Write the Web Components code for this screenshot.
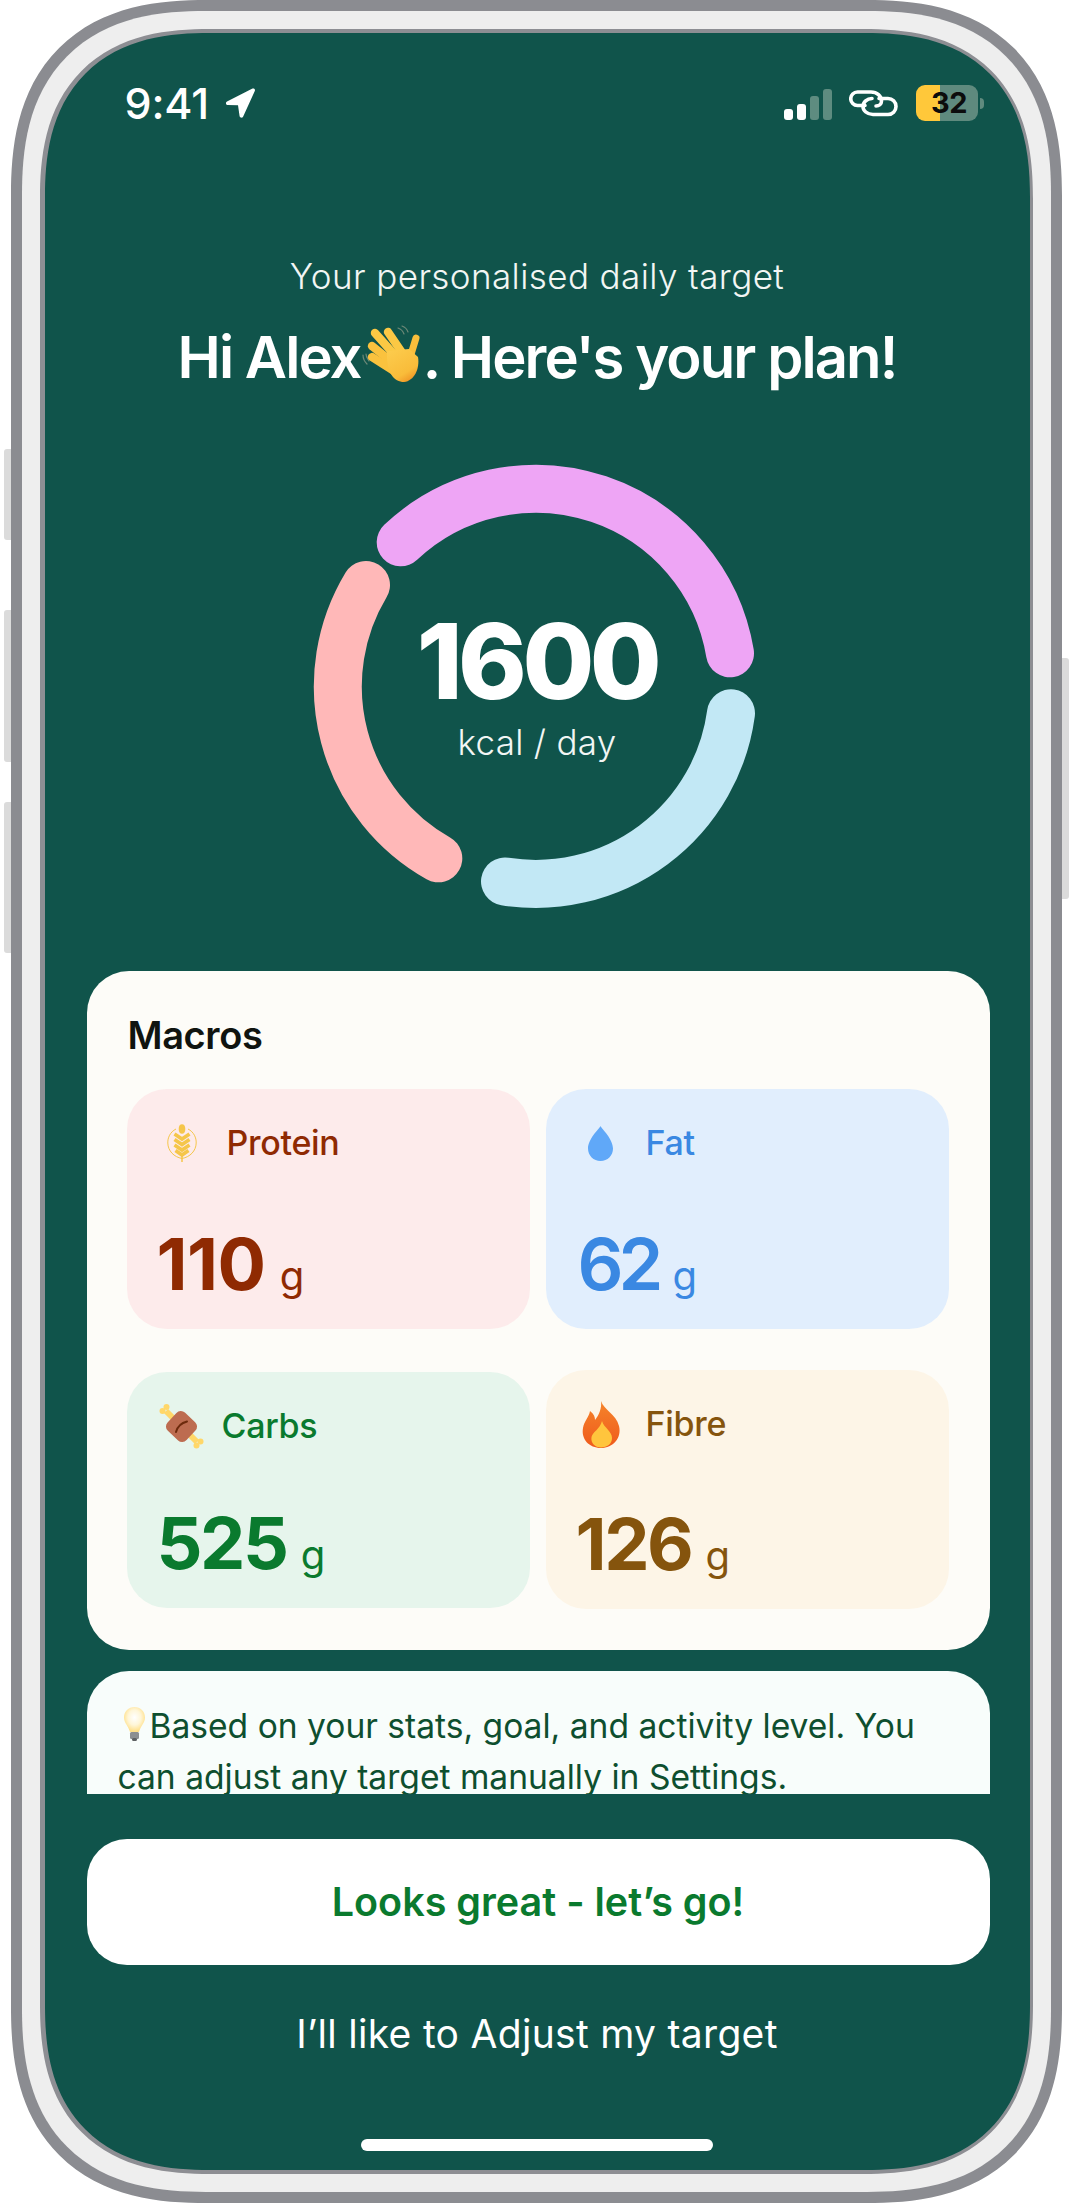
<!DOCTYPE html>
<html lang="en"><head><meta charset="utf-8"><title>Daily target</title>
<style>
html,body{margin:0;padding:0;background:#fff}
body{font-family:Inter,"Liberation Sans",sans-serif}
</style></head>
<body>
<device-frame>
  <status-bar></status-bar>
  <plan-heading>
    <span slot="sub">Your personalised daily target</span>
    <span slot="title">Hi Alex<svg width="60" height="58" viewBox="0 0 60 58" role="img" aria-label="waving hand" style="vertical-align:-5px;margin:0 1px 0 1px">
      <defs><linearGradient id="hg" x1="0.2" y1="0" x2="0.8" y2="1"><stop offset="0" stop-color="#FCCB4C"/><stop offset=".7" stop-color="#F9BC3A"/><stop offset="1" stop-color="#EE8F22"/></linearGradient></defs>
      <g fill="none" stroke="#8C9A86" stroke-width="1.2" stroke-linecap="round" opacity=".75"><path d="M36 3c3 1 5 3 6 6M40 1c3 1 5 3 6 6M1 30c0 4 2 7 4 9M4 29c0 3 2 5 3 7"/></g>
      <g stroke-linecap="round" fill="none" stroke-width="8.4">
        <path d="M13 8 38 36" stroke="#FBC844"/><path d="M26 7 43 32" stroke="#FBC844"/><path d="M10 21 35 41" stroke="#FAC23E"/><path d="M10 32 32 46" stroke="#FAC23E"/><path d="M54 13 47 36" stroke="#F9BE3B" stroke-width="7"/>
      </g>
      <path d="M25 26 47 24 56 32C58 44 52 56 42 57 32 57 24 48 25 26Z" fill="url(#hg)"/>
    </svg>. Here's your plan!</span>
  </plan-heading>
  <ring-chart value="1600" unit="kcal / day"></ring-chart>
  <macro-card heading="Macros">
    <macro-tile label="Protein" amount="110" tone="protein" track="-.5px">
      <svg slot="icon" width="30" height="38" viewBox="0 0 30 38" role="img" aria-label="wheat">
        <g fill="none" stroke="#F5C64A">
          <path d="M9 5C3 8 .6 14 .8 19 1 27 7 33 15 34.500 23 33 29 27 29.200 19 29.400 14 27 8 21 5" stroke-width="1"/>
          <path d="M7.500 10 15 15 22.500 10M7.500 15.500 15 20.500 22.500 15.500M7.500 21 15 26 22.500 21M8.500 26.500 15 31 21.500 26.500" stroke-width="3.600"/>
          <path d="M15 30V38" stroke-width="1.500"/>
        </g>
        <ellipse cx="15" cy="5" rx="3.300" ry="4.800" fill="#F5C64A"/>
      </svg>
    </macro-tile>
    <macro-tile label="Fat" amount="62" tone="fat" light track="-5px">
      <svg slot="icon" width="25" height="35" viewBox="0 0 25 35" role="img" aria-label="droplet"><path d="M12.500 0C14 3 25 13 25 22.500 25 29.500 19.500 35 12.500 35S0 29.500 0 22.500C0 13 11 3 12.500 0Z" fill="#60A8F8"/></svg>
    </macro-tile>
    <macro-tile label="Carbs" amount="525" tone="carbs" short>
      <svg slot="icon" width="45" height="45" viewBox="0 0 45 45" role="img" aria-label="meat on bone">
        <path d="M7 7 38 38" stroke="#FFD769" stroke-width="6"/>
        <g fill="#FFD769"><circle cx="3.500" cy="7" r="3"/><circle cx="7.500" cy="3" r="3"/><circle cx="37.500" cy="41.500" r="3"/><circle cx="41.500" cy="37.500" r="3"/></g>
        <rect x="9.500" y="10" width="26" height="25" rx="6" transform="rotate(43 22.500 22.500)" fill="#BD6C50"/>
        <path d="M17 28C18.500 22.500 22 19 28 17.500" fill="none" stroke="#6D2A0C" stroke-width="2" stroke-linecap="round"/>
      </svg>
    </macro-tile>
    <macro-tile label="Fibre" amount="126" tone="fibre" short lift>
      <svg slot="icon" width="42" height="49" viewBox="0 0 42 49" role="img" aria-label="fire">
        <defs><linearGradient id="fg" x1="0" y1="0" x2="0" y2="1"><stop offset="0" stop-color="#F5842A"/><stop offset="1" stop-color="#EF5A1C"/></linearGradient></defs>
        <path d="M21 1C24 10 36 14 39 26 42 38 33 48 21 48 9 48 1 39 3 28 4 21 9 17 10 11 14 14 15 17 15 20 19 15 22 8 21 1Z" fill="url(#fg)"/>
        <path d="M22 21C24 28 32 31 32 38 32 44 27 47.500 21 47.500 15 47.500 10.500 43 11.500 37 12.500 32 20 29 22 21Z" fill="#FFC53D"/>
      </svg>
    </macro-tile>
  </macro-card>
  <tip-card><svg width="21" height="34" viewBox="0 0 21 34" role="img" aria-label="light bulb" style="vertical-align:-3px;margin:0 5px 0 6px">
      <defs><radialGradient id="bg" cx=".5" cy=".42" r=".55"><stop offset="0" stop-color="#fff"/><stop offset=".55" stop-color="#FFF6D8"/><stop offset="1" stop-color="#FFE08A"/></radialGradient></defs>
      <path d="M10.500 0C16.500 0 21 4.500 21 10.500 21 16 16.500 19 15 25H6C4.500 19 0 16 0 10.500 0 4.500 4.500 0 10.500 0Z" fill="url(#bg)"/>
      <rect x="6" y="25" width="9" height="7" rx="1.500" fill="#8C8F91"/><rect x="8" y="31" width="5" height="3" rx="1.500" fill="#5E6163"/>
    </svg>Based on your stats, goal, and activity level. You can adjust any target manually in Settings.</tip-card>
  <action-button>Looks great - let’s go!</action-button>
  <text-action>I’ll like to Adjust my target</text-action>
  <home-bar></home-bar>
</device-frame>
<script>
function def(name, css, html, init){
  customElements.define(name, class extends HTMLElement{
    constructor(){super();const r=this.attachShadow({mode:'open'});r.innerHTML='<style>'+css+'</style>'+(typeof html==='function'?html(this):html);}
    connectedCallback(){if(init)init(this,this.shadowRoot);}
  });
}
def('device-frame',`
  :host{display:grid;grid-template-columns:7px 1051px 7px;width:1065px;margin-left:4px;font-family:Inter,"Liberation Sans",sans-serif}
  .side{display:flex;flex-direction:column}
  .side i{display:block;background:#DBDBDB}
  .l i{border-radius:3px 0 0 3px}.r i{border-radius:0 3px 3px 0}
  .shell{height:2203px;box-sizing:border-box;background:#8B8C91;border-radius:160px;padding:11px}
  .band{height:100%;box-sizing:border-box;background:#EEEEEE;border-radius:149px;padding:18px}
  .inner{height:100%;box-sizing:border-box;background:#8D8E93;border-radius:131px;padding:4px 3.5px 4px 4.5px}
  .screen{height:100%;box-sizing:border-box;background:#10544B;border-radius:127px;overflow:hidden;display:flex;flex-direction:column}
  @supports (corner-shape: superellipse(1.3)){
    .shell{border-radius:196px;corner-shape:superellipse(1.3)}
    .band{border-radius:184px;corner-shape:superellipse(1.3)}
    .inner{border-radius:170px;corner-shape:superellipse(1.3)}
    .screen{border-radius:165px;corner-shape:superellipse(1.3)}
  }
`,`<div class="side l"><i style="margin-top:449px;height:91px"></i><i style="margin-top:70px;height:152px"></i><i style="margin-top:40px;height:151px"></i></div>
<div class="shell"><div class="band"><div class="inner"><div class="screen"><slot></slot></div></div></div></div>
<div class="side r"><i style="margin-top:658px;height:241px"></i></div>`);

def('status-bar',`
  :host{display:flex;align-items:center;height:40px;padding:50px 46px 0 80px;color:#fff}
  .t{font:500 43px/40px Inter,"Liberation Sans",sans-serif;letter-spacing:-.2px}
  .arrow{margin-left:16px}
  .sp{flex:1}
  .bars{display:flex;align-items:flex-end;gap:4px;height:31px;margin-top:3px}
  .bars i{display:block;width:9px;border-radius:3px;background:#fff}
  .bars i.d{background:#5E8C80}
  .link{margin-left:17px}
  .bat{margin-left:18px;display:flex;align-items:center}
  .cell{position:relative;width:62px;height:36px;border-radius:9px;overflow:hidden;background:linear-gradient(90deg,#FFC83A 0 24px,#5F8A7E 24px);display:flex;align-items:center;justify-content:center;color:#0c0c0c;font:700 29px/36px Inter,"Liberation Sans",sans-serif;letter-spacing:-.5px;padding-left:5px;box-sizing:border-box}
  .cap{width:4px;height:11px;margin-left:2px;background:#5F8A7E;border-radius:0 4px 4px 0}
`,`<span class="t">9:41</span>
<svg class="arrow" width="30" height="30" viewBox="0 0 30 30"><path d="M27.500 .6 2 13.500C.2 14.500.8 17 2.800 17L13 17.300 14.600 28.300C15 30 17.500 30.200 18.200 28.500L29.800 3C30.500 1.200 29 0 27.500 .6Z" fill="#fff"/></svg>
<span class="sp"></span>
<span class="bars"><i style="height:11px"></i><i style="height:16px"></i><i class="d" style="height:24px"></i><i class="d" style="height:31px"></i></span>
<svg class="link" width="49" height="27" viewBox="0 0 49 27" fill="none" stroke="#fff" stroke-width="3.600" stroke-linecap="round"><path d="M16 15.500H8.500A6.700 6.700 0 0 1 8.500 2H22C28 2 32.500 6 32.500 11 32.500 14 30 16 27 16"/><path d="M30 8.500H39A8 8 0 0 1 39 24.500H24C18 24.500 14 20.500 14 16.500 14 12 18 8.500 23 8.500"/></svg>
<span class="bat"><span class="cell">32</span><span class="cap"></span></span>`);

def('plan-heading',`
  :host{display:block;text-align:center;color:#fff}
  .s{margin-top:131px;font:300 35px/44px Inter,"Liberation Sans",sans-serif;color:#F2F6F4;letter-spacing:.4px}
  h1{margin:23px 0 0;font:600 58px/72px Inter,"Liberation Sans",sans-serif;letter-spacing:-1.9px;white-space:nowrap}
`,`<div class="s"><slot name="sub"></slot></div><h1><slot name="title"></slot></h1>`);

def('ring-chart',`
  :host{display:grid;justify-items:center;margin-top:69px;height:450px;color:#fff;text-align:center}
  svg,.c{grid-area:1/1}
  .c{align-self:start;padding-top:147px}
  .v{font:800 104px/104px Inter,"Liberation Sans",sans-serif;letter-spacing:-4.5px}
  .u{margin-top:7px;font:300 35px/44px Inter,"Liberation Sans",sans-serif;color:#F2F6F4;letter-spacing:.3px}
`,h=>`<svg width="450" height="450" viewBox="0 0 450 450" fill="none" stroke-width="48" stroke-linecap="round">
  <path d="M88.700 80.300A197 197 0 0 1 418 191.300" stroke="#EEA5F5"/>
  <path d="M419 251.300A197 197 0 0 1 193 419.500" stroke="#C2E8F5"/>
  <path d="M126.300 396.300A197 197 0 0 1 54 123" stroke="#FFB8B8"/>
</svg>
<div class="c"><div class="v">${h.getAttribute('value')}</div><div class="u">${h.getAttribute('unit')}</div></div>`);

def('macro-card',`
  :host{display:block;margin:59px 40px 0 42px;height:679px;box-sizing:border-box;background:#FDFCF8;border-radius:42px;padding:42px 40px 0 40px}
  h2{margin:0 0 32px;font:600 38px/44px Inter,"Liberation Sans",sans-serif;letter-spacing:-.4px;color:#101410;padding-left:1px}
  .g{display:grid;grid-template-columns:403px 403px;grid-template-rows:240px 236px;column-gap:16px;row-gap:43px}
`,h=>`<h2>${h.getAttribute('heading')}</h2><div class="g"><slot></slot></div>`);

const tones={protein:['#FDEBEB','#8F2A02'],fat:['#E1EEFD','#3A88E2'],carbs:['#E6F5EC','#0A7A2E'],fibre:['#FDF5E7','#85540D']};
def('macro-tile',`
  :host{display:flex;flex-direction:column;box-sizing:border-box;border-radius:40px;padding:34px 0 29px 30px;background:var(--bg);color:var(--fg)}
  :host([lift]){margin:-2px 0 -1px}
  .h{display:flex;align-items:center;height:40px}
  .i{width:50px;display:flex;justify-content:center;align-items:center;flex:none;height:40px}
  .l{margin-left:var(--gap,20px);font:500 34px/40px Inter,"Liberation Sans",sans-serif;letter-spacing:-.3px}
  .a{margin-top:auto;display:flex;align-items:baseline;white-space:nowrap;height:72px}
  .n{font:700 72px/72px Inter,"Liberation Sans",sans-serif;letter-spacing:var(--track,-2.4px)}
  :host([light]) .n{font-weight:600;margin-left:2px}
  .g{margin-left:14px;font:400 40px/40px Inter,"Liberation Sans",sans-serif}
`,h=>{const t=tones[h.getAttribute('tone')];const tr=h.getAttribute('track');
  return `<style>:host{--bg:${t[0]};--fg:${t[1]};${h.getAttribute('label')==='Carbs'?'--gap:15px;':''}${tr?'--track:'+tr+';':''}}</style>
  <div class="h"><span class="i"><slot name="icon"></slot></span><span class="l">${h.getAttribute('label')}</span></div>
  <div class="a"><span class="n">${h.getAttribute('amount')}</span><span class="g">g</span></div>`});

def('tip-card',`
  :host{display:block;margin:21px 40px 0 42px;height:123px;overflow:hidden;box-sizing:border-box;background:#F8FDFB;border-radius:42px 42px 0 0;padding:29px 31px 0 31px;font:400 33.6px/51px Inter,"Liberation Sans",sans-serif;color:#0E4F2F}
`,`<slot></slot>`);

def('action-button',`
  :host{display:flex;align-items:center;justify-content:center;margin:45px 40px 0 42px;height:126px;background:#fff;border-radius:40px;color:#0A7A2E;font:600 39.5px/48px Inter,"Liberation Sans",sans-serif}
`,`<slot></slot>`);
def('text-action',`
  :host{display:block;margin-top:45px;text-align:center;color:#fff;font:400 39px/48px Inter,"Liberation Sans",sans-serif;letter-spacing:.3px}
`,`<slot></slot>`);
def('home-bar',`
  :host{display:block;width:352px;height:12px;margin:81px auto 0;background:#fff;border-radius:6px}
`,``);
</script>
</body></html>
